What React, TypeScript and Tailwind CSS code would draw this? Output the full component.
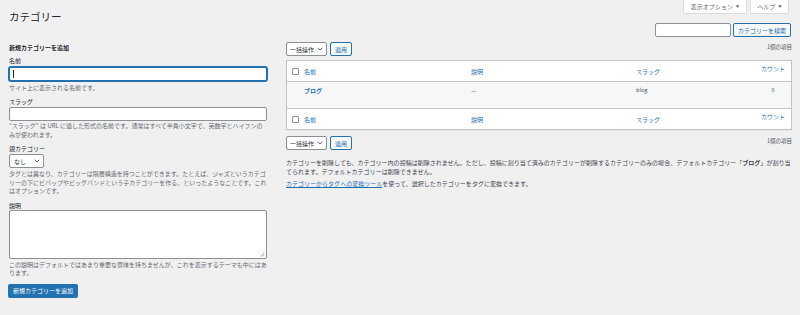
import React from "react";

function Chevron() {
  return (
    <svg width="6" height="4" viewBox="0 0 6 4" className="shrink-0">
      <path d="M0.8 0.8L3 3L5.2 0.8" fill="none" stroke="#50575e" strokeWidth="0.9" />
    </svg>
  );
}

function Checkbox() {
  return <div className="h-[7px] w-[7px] rounded-[1px] border border-[#8c8f94] bg-white" />;
}

function TableNav() {
  return (
    <div className="flex items-start justify-between">
      <div className="flex gap-[3px]">
        <div className="flex h-[14px] w-[41px] items-center justify-between rounded-[2px] border border-[#8c8f94] bg-white pl-[3px] pr-[3px] text-[#2c3338]">
          <span>一括操作</span>
          <Chevron />
        </div>
        <div className="flex h-[14px] w-[22px] items-center justify-center rounded-[2px] border border-[#2271b1] bg-[#f6f7f7] text-[#2271b1]">
          適用
        </div>
      </div>
      <span className="mt-[1px] text-[5.5px] text-[#50575e]">1個の項目</span>
    </div>
  );
}

function HeadRow() {
  return (
    <div className="grid h-[20px] grid-cols-[17px_167px_165px_119px_1fr] items-center bg-white text-[#2271b1]">
      <div className="pl-[5px]">
        <Checkbox />
      </div>
      <span>名前</span>
      <span>説明</span>
      <span>スラッグ</span>
      <span className="-mt-[6px] text-center">カウント</span>
    </div>
  );
}

export default function App() {
  return (
    <div className="h-[315px] w-[800px] overflow-hidden bg-[#f0f0f1] font-['Noto_Sans_CJK_JP','Noto_Sans',sans-serif] text-[6px] leading-[9px] text-[#3c434a]">
      <div className="flex h-[23px] justify-between">
        <h1 className="pl-[9px] pt-[10px] text-[10.5px] leading-[14px] text-[#1d2327]">カテゴリー</h1>
        <div className="flex gap-[3px] pr-[11px]">
          <div className="flex h-[14px] w-[64px] items-center justify-center gap-[3px] rounded-b-[2px] border border-t-0 border-[#dcdcde] bg-white text-[#646970]">
            表示オプション<span className="text-[3.5px]">▼</span>
          </div>
          <div className="flex h-[14px] w-[39px] items-center justify-center gap-[3px] rounded-b-[2px] border border-t-0 border-[#dcdcde] bg-white text-[#646970]">
            ヘルプ<span className="text-[3.5px]">▼</span>
          </div>
        </div>
      </div>

      <div className="flex justify-end gap-[2px] pr-[9px]">
        <div className="h-[14px] w-[76px] rounded-[2px] border border-[#8c8f94] bg-white" />
        <div className="flex h-[14px] w-[58px] items-center justify-center rounded-[2px] border border-[#2271b1] bg-[#f6f7f7] text-[#2271b1]">
          カテゴリーを検索
        </div>
      </div>

      <div className="flex">
        <div className="ml-[9px] flex w-[258px] flex-col pt-[6px]">
          <h2 className="font-bold text-[#1d2327]">新規カテゴリーを追加</h2>

          <label className="mt-[4px] text-[#1d2327]">名前</label>
          <div className="mt-[2px] flex h-[14px] items-center rounded-[2px] border border-[#2271b1] bg-white shadow-[0_0_0_1px_#2271b1]">
            <span className="ml-[3px] h-[8px] w-px bg-[#1d2327]" />
          </div>
          <p className="mt-[2px] text-[#646970]">サイト上に表示される名前です。</p>

          <label className="mt-[5px] text-[#1d2327]">スラッグ</label>
          <div className="mt-px h-[14px] rounded-[2px] border border-[#8c8f94] bg-white" />
          <p className="mt-px leading-[8.5px] text-[#646970]">
            “スラッグ” は URL に適した形式の名前です。通常はすべて半角小文字で、英数字とハイフンのみが使われます。
          </p>

          <label className="mt-[5px] text-[#1d2327]">親カテゴリー</label>
          <div className="mt-px flex h-[14px] w-[35px] items-center justify-between rounded-[2px] border border-[#8c8f94] bg-white pl-[4px] pr-[3px] text-[#2c3338]">
            <span>なし</span>
            <Chevron />
          </div>
          <p className="mt-[2px] leading-[8.5px] text-[#646970]">
            タグとは異なり、カテゴリーは階層構造を持つことができます。たとえば、ジャズというカテゴリーの下にビバップやビッグバンドという子カテゴリーを作る、といったようなことです。これはオプションです。
          </p>

          <label className="mt-[5px] text-[#1d2327]">説明</label>
          <div className="relative h-[49px] rounded-[2px] border border-[#8c8f94] bg-white">
            <svg width="5" height="5" viewBox="0 0 5 5" className="absolute bottom-[1px] right-[1px]">
              <path d="M4.5 0.5L0.5 4.5M4.5 2.5L2.5 4.5" stroke="#8c8f94" strokeWidth="0.6" />
            </svg>
          </div>
          <p className="mt-[2px] leading-[8.5px] text-[#646970]">
            この説明はデフォルトではあまり重要な意味を持ちませんが、これを表示するテーマも中にはあります。
          </p>

          <div className="-ml-px mt-[6px] flex h-[14px] w-[70px] items-center justify-center rounded-[2px] bg-[#2271b1] text-white">
            新規カテゴリーを追加
          </div>
        </div>

        <div className="ml-[19px] flex w-[506px] flex-col pt-[5px]">
          <TableNav />

          <div className="mt-[4px] border border-[#c3c4c7] shadow-[0_1px_1px_rgba(0,0,0,0.04)]">
            <div className="border-b border-[#c3c4c7]">
              <HeadRow />
            </div>
            <div className="grid h-[26px] grid-cols-[17px_167px_165px_119px_1fr] items-start bg-[#f6f7f7] pt-[4px]">
              <span />
              <span className="font-bold text-[#2271b1]">ブログ</span>
              <span className="text-[#50575e]">—</span>
              <span className="text-[5.5px] text-[#50575e]">blog</span>
              <span className="text-center text-[5.5px] text-[#50575e]">0</span>
            </div>
            <div className="border-t border-[#c3c4c7]">
              <HeadRow />
            </div>
          </div>

          <div className="mt-[6px]">
            <TableNav />
          </div>

          <div className="mt-[8px] text-[6.03px] text-[#3c434a]">
            <p>
              カテゴリーを削除しても、カテゴリー内の投稿は削除されません。ただし、投稿に割り当て済みのカテゴリーが削除するカテゴリーのみの場合、デフォルトカテゴリー「<span className="font-bold">ブログ</span>」が割り当てられます。デフォルトカテゴリーは削除できません。
            </p>
            <p className="mt-[3px]">
              <span className="text-[#2271b1] underline">カテゴリーからタグへの変換ツール</span>
              を使って、選択したカテゴリーをタグに変換できます。
            </p>
          </div>
        </div>
      </div>
    </div>
  );
}
